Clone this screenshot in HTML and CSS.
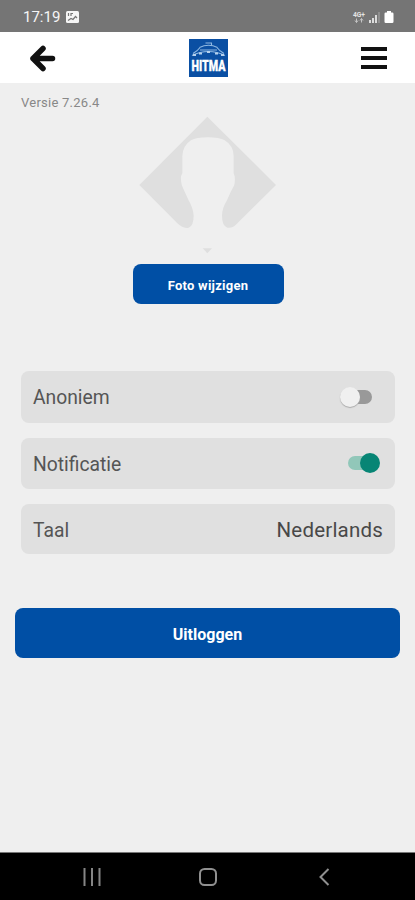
FILE: index.html
```html
<!DOCTYPE html>
<html lang="nl">
<head>
<meta charset="utf-8">
<title>Instellingen</title>
<link rel="stylesheet" href="styles.css">
</head>
<body>
<div class="phone">
  <div class="status">
    <span class="time">17:19</span>
    <svg class="picture" width="13" height="12" viewBox="0 0 13 12"><rect width="13" height="12" rx="1.5" fill="#f5f5f5"/><path d="M2.500 2v3M5 5V2.500h2M2 9.500l3-2 2 1L9.500 5.500 11 7" fill="none" stroke="#757575" stroke-width="1.200"/></svg>
    <svg class="signals" width="42" height="16" viewBox="0 0 42 16">
      <text x="0" y="7.500" class="net" textLength="12" lengthAdjust="spacingAndGlyphs">4G+</text>
      <path d="M3.500 9.500v4M2 11.500l1.500 2 1.500-2M8.500 13.500v-4M7 11.500l1.500-2 1.500 2" fill="none" stroke="#c4c4c4" stroke-width="1"/>
      <path d="M17 11v3M20 9v5M23 6v8" stroke="#ddd" stroke-width="2"/>
      <path d="M26 3v11" stroke="#999" stroke-width="1.5"/>
      <path d="M34 2h4v1.500h1.200q1.300 0 1.300 1.300v8q0 1.200-1.300 1.200h-6.400q-1.300 0-1.300-1.200v-8q0-1.300 1.300-1.300H34z" fill="#fff"/>
    </svg>
  </div>
  <header class="header">
    <svg class="back" width="27" height="27" viewBox="0 0 27 27"><path d="M23.500 13.500H4M14 3.500l-10 10 10 10" fill="none" stroke="#111" stroke-width="5.500" stroke-linecap="round" stroke-linejoin="round"/></svg>
    <svg width="39" height="38" viewBox="0 0 39 38">
      <rect width="39" height="38" fill="#0a4fa3"/>
      <path d="M16.500 4h6v2.500M10.500 8.500q9-4.500 18 0M4 14.500q5-3 7.500-6.500M35 14.500q-5-3-7.500-6.500M11 11h17M3 16.500q8-4 16.500-4t16.500 4" fill="none" stroke="#8eb8e2" stroke-width="1.100"/>
      <path d="M4 16h3M10 14.500h3M18 13h3M26 14.500h3M32 16h3" stroke="#b5d1ed" stroke-width="2"/>
      <text x="2.500" y="31.500" class="brand" textLength="34" lengthAdjust="spacingAndGlyphs">HITMA</text>
    </svg>
    <svg width="26" height="22" viewBox="0 0 26 22"><path d="M0 2h26M0 11h26M0 20h26" stroke="#111" stroke-width="4"/></svg>
  </header>
  <main class="content">
    <div class="version">Versie 7.26.4</div>
    <svg class="avatar" width="137" height="139" viewBox="57 33 411 417">
      <path d="M262 35L468 240 350 357Q336 371 322 368 306 362 306 332 306 310 321 286 331 260 342 242 346 230 344 214L341 205V154Q341 122 314 106 298 97 264 97 228 97 213 106 188 122 187 154V205L183 214Q182 230 186 242 195 262 205 284 220 310 221 332 221 362 206 368 190 372 172 355L58 240Z" fill="#dfdfdf"/>
      <path d="M248 430h28l-14 15z" fill="#dfdfdf"/>
    </svg>
    <button class="button photo">Foto wijzigen</button>
    <div class="settings">
      <div class="row"><span class="label">Anoniem</span><span class="switch off"></span></div>
      <div class="row"><span class="label">Notificatie</span><span class="switch on"></span></div>
      <div class="row language"><span class="label">Taal</span><span class="value">Nederlands</span></div>
    </div>
    <button class="button logout">Uitloggen</button>
  </main>
  <nav class="nav">
    <svg width="18" height="18" viewBox="0 0 18 18"><path d="M1.500 0v18M9 0v18M16.500 0v18" stroke="#858585" stroke-width="2"/></svg>
    <svg class="home" width="18" height="18" viewBox="0 0 18 18"><rect x="1" y="1" width="16" height="16" rx="4.500" fill="none" stroke="#909090" stroke-width="2"/></svg>
    <svg width="11" height="18" viewBox="0 0 11 18"><path d="M9.500 1L1.500 9l8 8" fill="none" stroke="#909090" stroke-width="2"/></svg>
  </nav>
</div>
</body>
</html>
```
FILE: styles.css
```css
* { box-sizing: border-box; }
body { margin: 0; font-family: Roboto, sans-serif; }
.phone { width: 415px; height: 900px; display: flex; flex-direction: column; background: #efefef; overflow: hidden; }
svg { display: block; flex: none; overflow: visible; }
.status { height: 32px; flex: none; background: #757575; display: flex; align-items: center; padding: 2px 20px 0 23px; }
.time { width: 37px; font-size: 15px; line-height: 18px; color: #f5f5f5; white-space: nowrap; }
.picture { margin-left: 6px; }
.signals { margin-left: auto; }
.net { font: 700 7px Roboto, sans-serif; fill: #e4e4e4; }
.header { height: 51px; flex: none; background: #fff; display: flex; align-items: center; justify-content: space-between; padding: 0 28px 0 29px; }
.back { margin-top: 2px; }
.brand { font: 900 14.5px Roboto, sans-serif; fill: #fff; stroke: #fff; stroke-width: 0.3px; }
.content { flex: 1; display: flex; flex-direction: column; align-items: center; }
.version { align-self: flex-start; margin: 11px 0 0 21px; font-size: 13px; line-height: 17px; letter-spacing: 0.25px; color: #888; }
.avatar { margin: 5px 0 9px; }
.button { flex: none; border: 0; padding: 0; border-radius: 8px; background: #004fa5; color: #fff; font-family: Roboto, sans-serif; font-weight: 700; }
.photo { width: 151px; height: 40px; margin-left: 1px; font-size: 13px; letter-spacing: 0.25px; padding-top: 2px; }
.settings { width: 374px; margin: 67px 0 54px 1px; display: flex; flex-direction: column; gap: 15px; }
.row { height: 51.500px; border-radius: 8px; background: #e0e0e0; display: flex; align-items: center; justify-content: space-between; padding: 2px 12px 0; color: #555; font-size: 19.300px; }
.language { height: 50px; }
.value { font-size: 20.500px; letter-spacing: 0.2px; color: #484848; }
.switch { position: relative; height: 20px; width: 32px; top: -1px; }
.switch::before, .switch::after { content: ""; position: absolute; }
.switch::before { top: 3px; width: 24px; height: 14px; border-radius: 7px; }
.switch::after { top: 0; width: 20px; height: 20px; border-radius: 50%; }
.off { margin-right: 11px; }
.off::before { right: 0; background: #999; }
.off::after { left: 0; background: #f0f0f0; box-shadow: 0 1px 1px #aaa; }
.on { margin-right: 3px; }
.on::before { left: 0; background: #91c7b9; }
.on::after { right: 0; background: #078575; }
.logout { width: 385px; height: 50px; font-size: 16px; padding-top: 2px; }
.nav { height: 48px; flex: none; background: #000; border-top: 1px solid #777; display: flex; align-items: center; justify-content: space-between; padding: 0 85px 0 83px; }
.home { margin-right: 4px; }
```
